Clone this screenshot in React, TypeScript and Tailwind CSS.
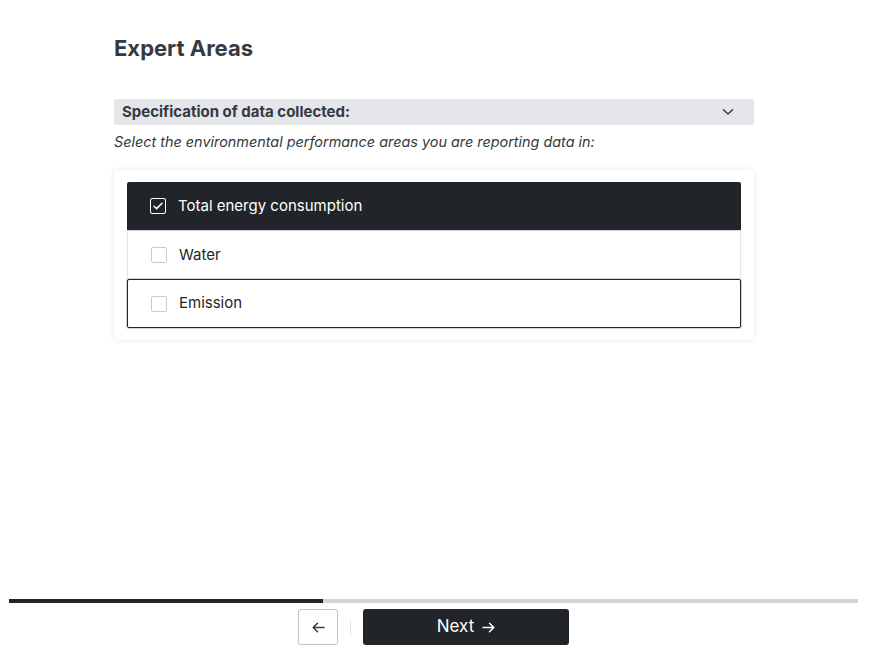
import { useState } from "react";

const areas = [
  { id: "energy", label: "Total energy consumption" },
  { id: "water", label: "Water" },
  { id: "emission", label: "Emission" },
];

function CheckBox({ checked }: { checked: boolean }) {
  return (
    <span
      className={
        "flex h-4 w-4 shrink-0 items-center justify-center rounded-[2px] border " +
        (checked ? "border-white" : "border-[#c6cbd1] bg-white")
      }
    >
      {checked && (
        <svg width="10" height="8" viewBox="0 0 10 8" fill="none">
          <path
            d="M1 4.2 3.6 6.6 9 1.2"
            stroke="white"
            strokeWidth="1.5"
            strokeLinecap="round"
            strokeLinejoin="round"
          />
        </svg>
      )}
    </span>
  );
}

export default function App() {
  const [selected, setSelected] = useState<string[]>(["energy"]);
  const focused = "emission";

  const toggle = (id: string) =>
    setSelected((s) => (s.includes(id) ? s.filter((x) => x !== id) : [...s, id]));

  return (
    <div
      className="flex h-[660px] flex-col bg-white text-[#212529]"
      style={{ fontFamily: "Inter, 'Noto Sans', sans-serif" }}
    >
      <main className="ml-[114px] w-[640px] pt-[33px]">
        <h1 className="text-[22px] font-bold leading-[30px] text-[#343a40]">
          Expert Areas
        </h1>

        <button className="mt-[36px] flex h-[26px] w-full items-center justify-between rounded-[2px] bg-[#e4e6ea] pl-2 pr-5">
          <span className="text-[15px] font-bold text-[#343a40]">
            Specification of data collected:
          </span>
          <svg width="12" height="8" viewBox="0 0 12 8" fill="none">
            <path
              d="M1.5 1.8 6 6 10.5 1.8"
              stroke="#343a40"
              strokeWidth="1.5"
              strokeLinecap="round"
              strokeLinejoin="round"
            />
          </svg>
        </button>

        <p className="mt-[7px] text-[14.4px] italic leading-5 text-[#343a40]">
          Select the environmental performance areas you are reporting data in:
        </p>

        <div className="mt-[18px] rounded-[3px] bg-white px-[13px] py-[12px] shadow-[0_0_6px_rgba(0,0,0,0.09)]">
          <ul className="flex flex-col">
            {areas.map((a, i) => {
              const on = selected.includes(a.id);
              const isFocus = a.id === focused;
              return (
                <li
                  key={a.id}
                  onClick={() => toggle(a.id)}
                  className={
                    "flex cursor-pointer items-center gap-3 pl-[23px] text-[15px] " +
                    (i === 0 ? "h-[48px] " : "h-[49px] ") +
                    (on
                      ? "rounded-t-[2px] bg-[#212529] text-white"
                      : "bg-white text-[#212529] ") +
                    (isFocus
                      ? " rounded-[2px] border border-[#212529] shadow-[0_0_0_1px_#ced4da]"
                      : "") +
                    (!on && !isFocus ? " border-x border-[#e4e6ea]" : "") +
                    (i > 0 && !isFocus ? " border-t border-t-[#ced4da]" : "")
                  }
                >
                  <CheckBox checked={on} />
                  <span>{a.label}</span>
                </li>
              );
            })}
          </ul>
        </div>
      </main>

      <footer className="mt-auto pb-[15px]">
        <div className="ml-[9px] flex h-[4px] w-[849px] bg-[#ced4da]">
          <div className="h-full w-[37%] bg-[#212529]" />
        </div>
        <div className="mt-[6px] flex items-center pl-[298px]">
          <button className="flex h-9 w-10 items-center justify-center rounded-[3px] border border-[#bfc4ca] bg-white">
            <svg width="13" height="11" viewBox="0 0 13 11" fill="none">
              <path
                d="M12 5.5H1.5M5.5 1.2 1.2 5.5 5.5 9.8"
                stroke="#343a40"
                strokeWidth="1.5"
                strokeLinecap="round"
                strokeLinejoin="round"
              />
            </svg>
          </button>
          <span className="mx-3 h-[15px] w-px bg-[#dee2e6]" />
          <button className="flex h-9 w-[206px] items-center justify-center gap-2 rounded-[3px] bg-[#212529] text-[17px] text-white">
            Next
            <svg width="13" height="11" viewBox="0 0 13 11" fill="none">
              <path
                d="M1 5.5h10.5M7.5 1.2l4.3 4.3-4.3 4.3"
                stroke="white"
                strokeWidth="1.5"
                strokeLinecap="round"
                strokeLinejoin="round"
              />
            </svg>
          </button>
        </div>
      </footer>
    </div>
  );
}
